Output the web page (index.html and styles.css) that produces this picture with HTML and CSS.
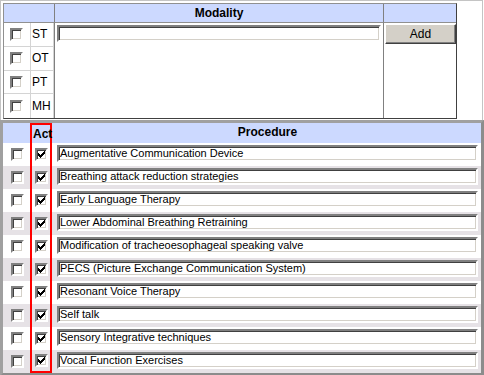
FILE: index.html
```html
<!DOCTYPE html>
<html lang="en">
<head>
    <meta charset="UTF-8">
    <title>Procedures</title>
    <link rel="stylesheet" href="styles.css">
</head>
<body>
<div class="modality-frame">
    <table class="modality">
        <colgroup><col class="w-codes"><col class="w-name"><col class="w-add"></colgroup>
        <tr class="head">
            <th class="th-codes"></th>
            <th class="th-name">Modality</th>
            <th class="th-add"></th>
        </tr>
        <tr class="body-row">
            <td class="codes-cell">
                <table class="codes">
                    <tr><td class="box-cell"><span class="cb"></span></td><td class="code">ST</td></tr>
                    <tr><td class="box-cell"><span class="cb"></span></td><td class="code">OT</td></tr>
                    <tr><td class="box-cell"><span class="cb"></span></td><td class="code">PT</td></tr>
                    <tr><td class="box-cell"><span class="cb"></span></td><td class="code">MH</td></tr>
                </table>
            </td>
            <td class="name-cell"><div class="field modality-field"></div></td>
            <td class="add-cell"><button class="add-button">Add</button></td>
        </tr>
    </table>
</div>

<table class="procedures">
    <colgroup><col class="w-sel"><col class="w-act"><col class="w-proc"></colgroup>
    <tr class="head">
        <th class="col-sel"></th>
        <th class="col-act">Act</th>
        <th class="col-name">Procedure</th>
    </tr>
    <tr><td class="col-sel"><span class="cb"></span></td><td class="col-act"><span class="cb"><svg class="tick" width="9" height="9" viewBox="0 0 9 9"><path d="M1 3h1v3H1zM2 4h1v3H2zM3 5h1v3H3zM4 4h1v3H4zM5 3h1v3H5zM6 2h1v3H6zM7 1h1v3H7z"/></svg></span></td><td class="col-name"><div class="field">Augmentative Communication Device</div></td></tr>
    <tr><td class="col-sel"><span class="cb"></span></td><td class="col-act"><span class="cb"><svg class="tick" width="9" height="9" viewBox="0 0 9 9"><path d="M1 3h1v3H1zM2 4h1v3H2zM3 5h1v3H3zM4 4h1v3H4zM5 3h1v3H5zM6 2h1v3H6zM7 1h1v3H7z"/></svg></span></td><td class="col-name"><div class="field">Breathing attack reduction strategies</div></td></tr>
    <tr><td class="col-sel"><span class="cb"></span></td><td class="col-act"><span class="cb"><svg class="tick" width="9" height="9" viewBox="0 0 9 9"><path d="M1 3h1v3H1zM2 4h1v3H2zM3 5h1v3H3zM4 4h1v3H4zM5 3h1v3H5zM6 2h1v3H6zM7 1h1v3H7z"/></svg></span></td><td class="col-name"><div class="field">Early Language Therapy</div></td></tr>
    <tr><td class="col-sel"><span class="cb"></span></td><td class="col-act"><span class="cb"><svg class="tick" width="9" height="9" viewBox="0 0 9 9"><path d="M1 3h1v3H1zM2 4h1v3H2zM3 5h1v3H3zM4 4h1v3H4zM5 3h1v3H5zM6 2h1v3H6zM7 1h1v3H7z"/></svg></span></td><td class="col-name"><div class="field">Lower Abdominal Breathing Retraining</div></td></tr>
    <tr><td class="col-sel"><span class="cb"></span></td><td class="col-act"><span class="cb"><svg class="tick" width="9" height="9" viewBox="0 0 9 9"><path d="M1 3h1v3H1zM2 4h1v3H2zM3 5h1v3H3zM4 4h1v3H4zM5 3h1v3H5zM6 2h1v3H6zM7 1h1v3H7z"/></svg></span></td><td class="col-name"><div class="field">Modification of tracheoesophageal speaking valve</div></td></tr>
    <tr><td class="col-sel"><span class="cb"></span></td><td class="col-act"><span class="cb"><svg class="tick" width="9" height="9" viewBox="0 0 9 9"><path d="M1 3h1v3H1zM2 4h1v3H2zM3 5h1v3H3zM4 4h1v3H4zM5 3h1v3H5zM6 2h1v3H6zM7 1h1v3H7z"/></svg></span></td><td class="col-name"><div class="field">PECS (Picture Exchange Communication System)</div></td></tr>
    <tr><td class="col-sel"><span class="cb"></span></td><td class="col-act"><span class="cb"><svg class="tick" width="9" height="9" viewBox="0 0 9 9"><path d="M1 3h1v3H1zM2 4h1v3H2zM3 5h1v3H3zM4 4h1v3H4zM5 3h1v3H5zM6 2h1v3H6zM7 1h1v3H7z"/></svg></span></td><td class="col-name"><div class="field">Resonant Voice Therapy</div></td></tr>
    <tr><td class="col-sel"><span class="cb"></span></td><td class="col-act"><span class="cb"><svg class="tick" width="9" height="9" viewBox="0 0 9 9"><path d="M1 3h1v3H1zM2 4h1v3H2zM3 5h1v3H3zM4 4h1v3H4zM5 3h1v3H5zM6 2h1v3H6zM7 1h1v3H7z"/></svg></span></td><td class="col-name"><div class="field">Self talk</div></td></tr>
    <tr><td class="col-sel"><span class="cb"></span></td><td class="col-act"><span class="cb"><svg class="tick" width="9" height="9" viewBox="0 0 9 9"><path d="M1 3h1v3H1zM2 4h1v3H2zM3 5h1v3H3zM4 4h1v3H4zM5 3h1v3H5zM6 2h1v3H6zM7 1h1v3H7z"/></svg></span></td><td class="col-name"><div class="field">Sensory Integrative techniques</div></td></tr>
    <tr class="last"><td class="col-sel"><span class="cb"></span></td><td class="col-act"><span class="cb"><svg class="tick" width="9" height="9" viewBox="0 0 9 9"><path d="M1 3h1v3H1zM2 4h1v3H2zM3 5h1v3H3zM4 4h1v3H4zM5 3h1v3H5zM6 2h1v3H6zM7 1h1v3H7z"/></svg></span></td><td class="col-name"><div class="field">Vocal Function Exercises</div></td></tr>
</table>
</body>
</html>
```

FILE: styles.css
```css
body { margin: 0; background: #fff; font-family: "Liberation Sans", Arial, sans-serif; font-size: 11px; color: #000; }
table { border-collapse: separate; border-spacing: 0; table-layout: fixed; }
td, th { padding: 0; box-sizing: border-box; }

/* checkbox, classic look */
.cb {
    display: inline-block; width: 9px; height: 9px; background: #fff; vertical-align: middle;
    border: 2px solid; border-color: #808080 #fff #fff #808080;
    box-shadow: inset 1px 1px 0 #404040, inset -1px -1px 0 #d4d0c8;
}
.tick { display: block; fill: #000; }

.field {
    box-sizing: border-box; height: 17px; padding: 0 1px; line-height: 13px; white-space: nowrap; overflow: hidden;
    background: #fff; border: 2px solid; border-color: #808080 #fff #fff #808080;
    box-shadow: inset 1px 1px 0 #404040, inset -1px -1px 0 #d4d0c8;
}

.head th { background: #ccd9ff; font-size: 12px; font-weight: bold; text-align: center; color: #000; }

/* top block */
.modality-frame {
    box-sizing: border-box; width: 483px; height: 120px; padding: 2px 0 0 2px;
    border: 1px solid #c4c4c4; border-bottom: 0;
}
.modality { width: 454px; border: 1px solid; border-color: #909090 #404040 #404040 #909090; }
.w-codes { width: 51px; }
.w-name { width: 329px; }
.w-add { width: 72px; }
.modality .head th { height: 19px; border-bottom: 1px solid #909090; }
.modality .th-codes, .modality .codes-cell,
.modality .th-name, .modality .name-cell { border-right: 1px solid #808080; }
.body-row > td { vertical-align: top; height: 95px; }
.codes { width: 50px; height: 95px; }
.codes td { border-right: 1px solid #d4d4d4; border-bottom: 1px solid #d4d4d4; height: 23px; vertical-align: middle; }
.codes tr:last-child td { border-bottom: 0; }
.codes .box-cell { width: 27px; text-align: center; padding-right: 1px; }
.codes .code { font-size: 12px; padding-left: 1px; }
.name-cell { padding: 2px 2px 0 2px !important; }
.add-cell { padding: 1px 1px 0 1px !important; }
.add-button {
    display: block; width: 71px; height: 20px; font-family: inherit; font-size: 12px; color: #000; background: #d4d0c8; padding: 0;
    border: 1px solid; border-color: #fff #404040 #404040 #fff; box-shadow: inset -1px -1px 0 #808080;
}

/* procedure list */
.procedures { width: 484px; border: 3px solid #a0a0a0; border-right-color: #8c8c8c; border-bottom-color: #8c8c8c; }
.w-sel { width: 27px; }
.w-act { width: 22px; }
.w-proc { width: 429px; }
.procedures .head th { height: 19px; }
.procedures td { height: 23px; }
.procedures tr:nth-child(odd) td { background: #e6e2e6; }
.procedures .col-sel { text-align: center; padding-left: 1px; }
.procedures .col-act { text-align: center; border-left: 2px solid #f00; border-right: 2px solid #f00; }
.procedures .head .col-act { border-top: 2px solid #f00; text-align: left; padding-left: 1px; white-space: nowrap; }
.procedures .last .col-act { border-bottom: 2px solid #f00; }
.procedures .col-name { padding: 2px 3px 4px 5px; vertical-align: top; }
```
